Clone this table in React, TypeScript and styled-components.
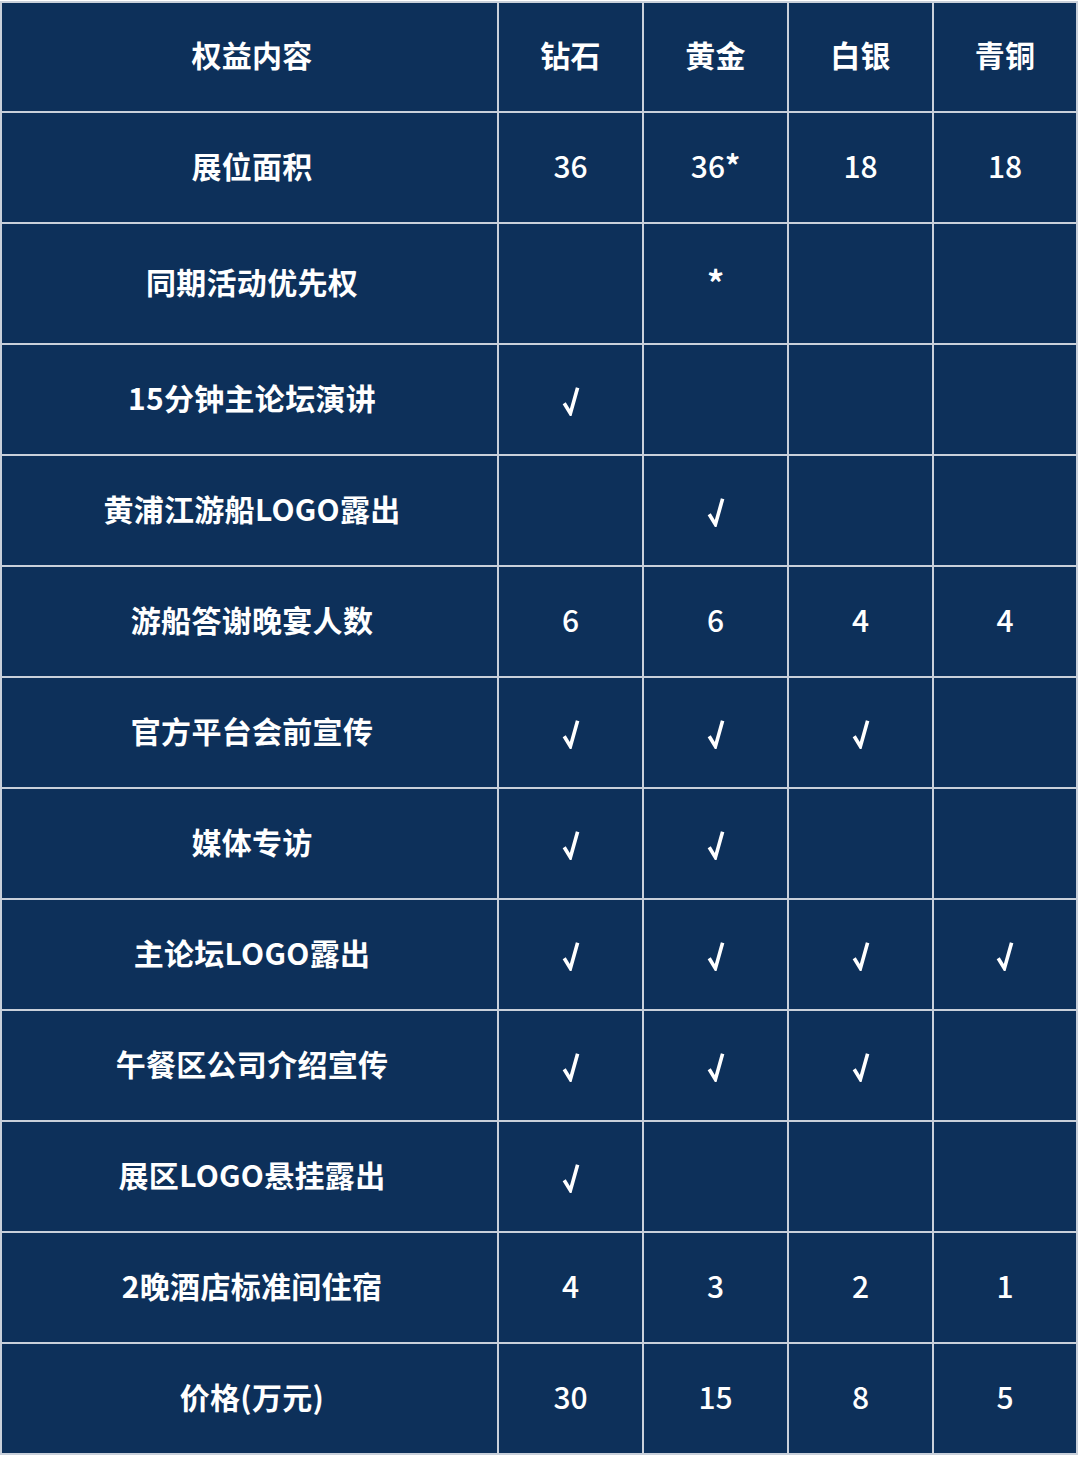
import React from "react";
import styled, { createGlobalStyle } from "styled-components";

const Global = createGlobalStyle`
  html, body { margin: 0; padding: 0; background: #ffffff; }
  body { font-family: "Noto Sans CJK SC", "Noto Sans", sans-serif; }
`;

const Grid = styled.div`
  display: grid;
  grid-template-columns: 495px 143px 143px 143px 142px;
  grid-template-rows: 108px 109px 119px repeat(10, 109px);
  gap: 2px;
  padding: 2px;
  margin-top: 1px;
  width: fit-content;
  background: #c9d0da;
`;

type Kind = "label" | "num" | "mark" | "star" | "empty";

const Cell = styled.div<{ $kind: Kind; $first?: boolean }>`
  background: #0d305a;
  color: #ffffff;
  display: flex;
  align-items: center;
  justify-content: center;
  font-family: "Noto Sans CJK SC", "Noto Sans", sans-serif;
  font-size: ${(p) => (p.$kind === "star" ? "34px" : "30px")};
  font-weight: ${(p) => (p.$kind === "num" ? 500 : 700)};
  letter-spacing: ${(p) => (p.$kind === "label" ? "0.3px" : "0")};
  line-height: 1;
  padding-left: ${(p) => (p.$first ? "5px" : "0")};
  padding-top: ${(p) => (p.$kind === "mark" ? "3px" : "0")};
  padding-bottom: ${(p) =>
    p.$kind === "label" || p.$kind === "num" ? "6px" : p.$kind === "star" ? "4px" : "0"};
`;

const Star = styled.span`
  font-weight: 700;
  font-size: 30px;
  position: relative;
  top: -1px;
`;

const Check = styled.svg`
  width: 18px;
  height: 30px;
  display: block;
`;

function CheckMark() {
  return (
    <Check viewBox="0 0 18 30" aria-label="√">
      <path
        d="M2.2 17.2 L8.4 27.4 L15.6 1.8"
        fill="none"
        stroke="#ffffff"
        strokeWidth="3.6"
        strokeLinejoin="miter"
        strokeLinecap="butt"
      />
    </Check>
  );
}

const header = ["权益内容", "钻石", "黄金", "白银", "青铜"];

const C = "√";
const rows: string[][] = [
  ["展位面积", "36", "36*", "18", "18"],
  ["同期活动优先权", "", "*", "", ""],
  ["15分钟主论坛演讲", C, "", "", ""],
  ["黄浦江游船LOGO露出", "", C, "", ""],
  ["游船答谢晚宴人数", "6", "6", "4", "4"],
  ["官方平台会前宣传", C, C, C, ""],
  ["媒体专访", C, C, "", ""],
  ["主论坛LOGO露出", C, C, C, C],
  ["午餐区公司介绍宣传", C, C, C, ""],
  ["展区LOGO悬挂露出", C, "", "", ""],
  ["2晚酒店标准间住宿", "4", "3", "2", "1"],
  ["价格(万元)", "30", "15", "8", "5"],
];

function kindOf(v: string): Kind {
  if (v === "") return "empty";
  if (v === C) return "mark";
  if (v === "*") return "star";
  return "num";
}

function renderValue(v: string) {
  if (v === C) return <CheckMark />;
  if (v.length > 1 && v.endsWith("*")) {
    return (
      <>
        {v.slice(0, -1)}
        <Star>*</Star>
      </>
    );
  }
  return v;
}

export default function App() {
  return (
    <>
      <Global />
      <Grid>
        {header.map((h, i) => (
          <Cell key={"h" + i} $kind="label" $first={i === 0}>
            {h}
          </Cell>
        ))}
        {rows.map((r, ri) =>
          r.map((v, ci) => (
            <Cell
              key={ri + "-" + ci}
              $kind={ci === 0 ? "label" : kindOf(v)}
              $first={ci === 0}
            >
              {ci === 0 ? v : renderValue(v)}
            </Cell>
          ))
        )}
      </Grid>
    </>
  );
}
